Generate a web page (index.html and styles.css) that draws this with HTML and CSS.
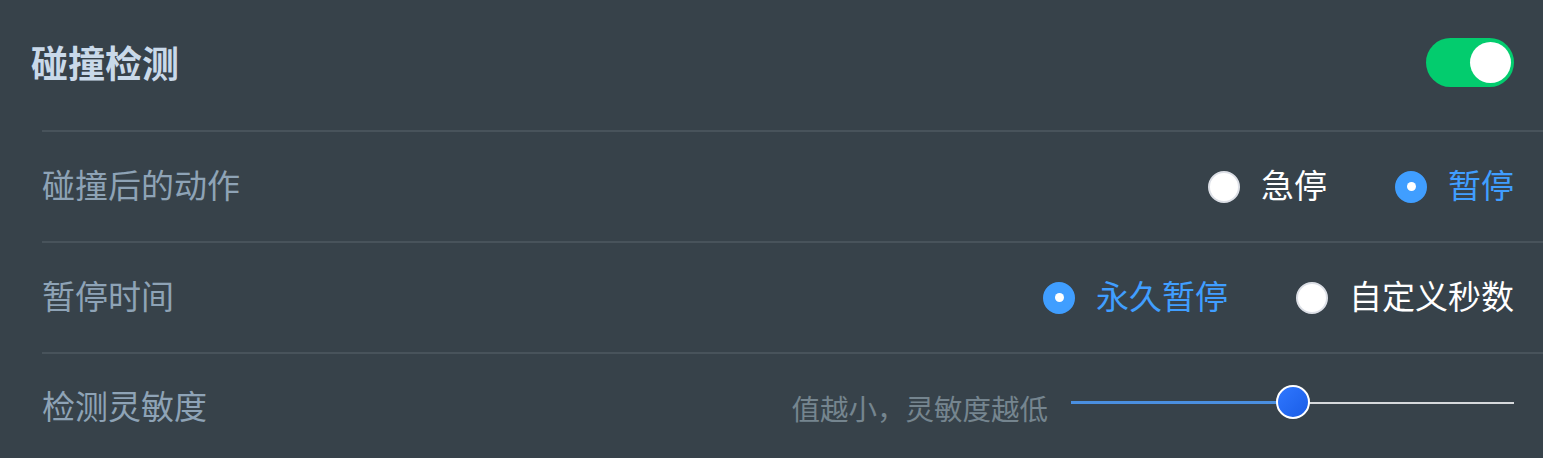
FILE: index.html
```html
<!DOCTYPE html>
<html lang="zh-CN">
<head>
<meta charset="utf-8">
<title>碰撞检测</title>
<link rel="stylesheet" href="styles.css">
</head>
<body>
<div class="card">
  <div class="head">
    <div class="title">碰撞检测</div>
    <div class="switch"><span class="knob"></span></div>
  </div>
  <div class="rows">
    <div class="row">
      <div class="label">碰撞后的动作</div>
      <div class="radios">
        <div class="radio"><span class="dot"></span><span class="rtext">急停</span></div>
        <div class="radio on"><span class="dot"></span><span class="rtext">暂停</span></div>
      </div>
    </div>
    <div class="row">
      <div class="label">暂停时间</div>
      <div class="radios">
        <div class="radio on"><span class="dot"></span><span class="rtext">永久暂停</span></div>
        <div class="radio"><span class="dot"></span><span class="rtext">自定义秒数</span></div>
      </div>
    </div>
    <div class="row last">
      <div class="label">检测灵敏度</div>
      <div class="sens">
        <span class="hint">值越小，灵敏度越低</span>
        <div class="slider">
          <div class="fill" style="width: 50%"></div>
          <span class="thumb" style="left: 50%"></span>
        </div>
      </div>
    </div>
  </div>
</div>
</body>
</html>
```
FILE: styles.css
```css
html, body {
  margin: 0;
  padding: 0;
  background: #37424a;
  overflow: hidden;
}
body {
  font-family: "Noto Sans CJK SC", "Noto Sans", sans-serif;
  width: 1543px;
  height: 458px;
}
.card {
  background: #37424a;
}
.head {
  height: 130px;
  display: flex;
  align-items: center;
  justify-content: space-between;
  padding-left: 31px;
  padding-right: 29px;
}
.title {
  font-size: 37px;
  font-weight: 700;
  color: #c9d9e9;
  line-height: 1;
  margin-top: -6px;
}
.switch {
  width: 88px;
  height: 49px;
  border-radius: 25px;
  background: #03cc6e;
  position: relative;
  margin-top: -6px;
}
.knob {
  position: absolute;
  width: 41px;
  height: 41px;
  border-radius: 50%;
  background: #fff;
  right: 3px;
  top: 4px;
}
.rows {
  margin-left: 42px;
}
.row {
  height: 109px;
  border-top: 2px solid #48535b;
  display: flex;
  align-items: center;
  justify-content: space-between;
  padding-right: 29px;
}
.label {
  font-size: 33px;
  color: #8ea3b6;
  line-height: 1;
  margin-top: -4px;
}
.row.last .label {
  margin-top: -6px;
}
.radios {
  display: flex;
  align-items: center;
  gap: 68px;
}
.radio {
  display: flex;
  align-items: center;
  gap: 21px;
}
.dot {
  width: 32px;
  height: 32px;
  box-sizing: border-box;
  border-radius: 50%;
  background: #fff;
  border: 2px solid #dcdfe6;
  display: flex;
  align-items: center;
  justify-content: center;
}
.radio.on .dot {
  background: #409eff;
  border-color: #409eff;
}
.radio.on .dot::after {
  content: "";
  width: 9px;
  height: 9px;
  border-radius: 50%;
  background: #fff;
}
.rtext {
  font-size: 33px;
  line-height: 1;
  color: #ffffff;
  margin-top: -4px;
}
.radio.on .rtext {
  color: #409eff;
}
.sens {
  display: flex;
  align-items: center;
  gap: 23px;
}
.hint {
  font-size: 28.5px;
  color: #75858f;
  line-height: 1;
}
.slider {
  position: relative;
  width: 443px;
  height: 2px;
  background: #d6d9dc;
  margin-bottom: 12px;
}
.fill {
  height: 3px;
  background: #4a8fe0;
  margin-top: -1px;
}
.thumb {
  position: absolute;
  top: 0;
  width: 34px;
  height: 34px;
  box-sizing: border-box;
  border-radius: 50%;
  border: 2px solid #fff;
  background: linear-gradient(135deg, #2f77ff, #1a5de6);
  transform: translate(-50%, -50%);
}
```
